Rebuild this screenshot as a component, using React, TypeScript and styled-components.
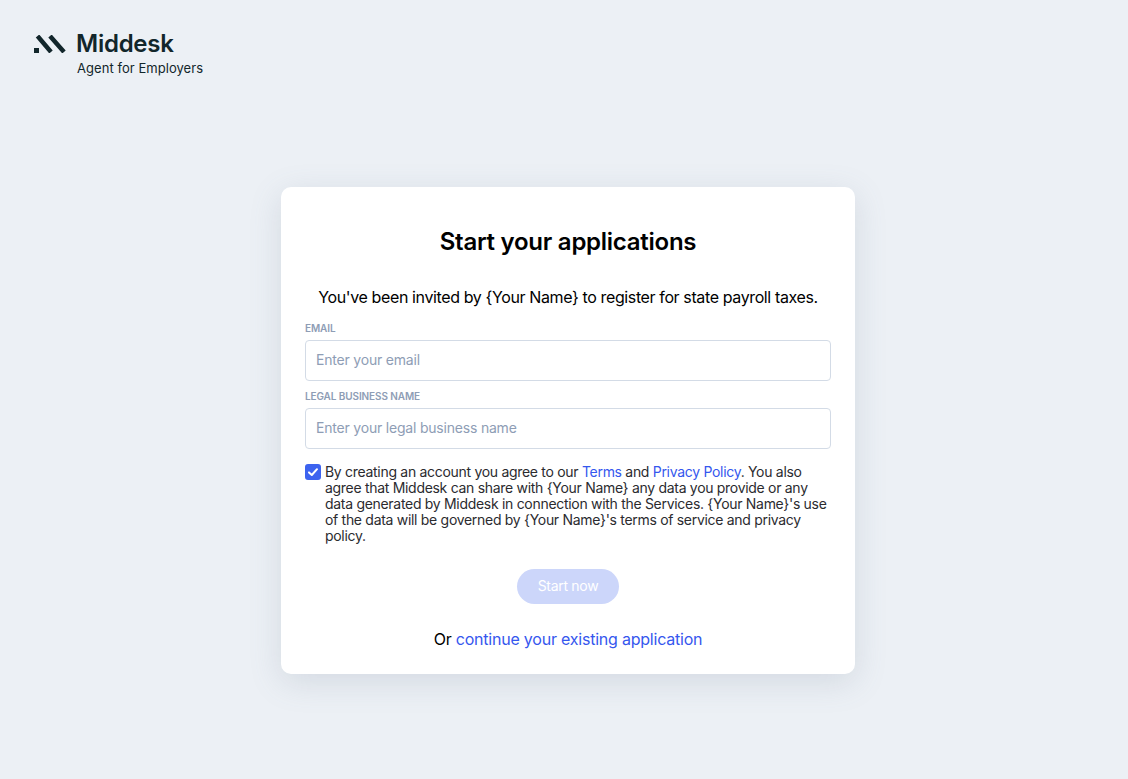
import React from "react";
import styled, { createGlobalStyle } from "styled-components";

const Global = createGlobalStyle`
  html, body { margin: 0; padding: 0; height: 100%; background: #ecf0f5; }
  body { font-family: Inter, "Liberation Sans", sans-serif; color: #000; }
  * { box-sizing: border-box; }
`;

const Page = styled.div`
  min-height: 779px;
  display: flex;
  flex-direction: column;
  background: #ecf0f5;
`;

const Header = styled.header`
  height: 82px;
  padding: 31px 0 0 34px;
`;

const Brand = styled.div`
  display: grid;
  grid-template-columns: 42px auto;
  justify-content: start;
`;

const Wordmark = styled.div`
  font-size: 24px;
  line-height: 26px;
  font-weight: 600;
  letter-spacing: -0.25px;
  color: #12262b;
`;

const Tagline = styled.div`
  grid-column: 2;
  font-size: 13px;
  line-height: 16px;
  margin: 3px 0 0 1px;
  color: #12262b;
  letter-spacing: 0.05px;
`;

const Main = styled.main`
  flex: 1;
  display: flex;
  align-items: center;
  justify-content: center;
  padding-left: 8px;
`;

const Card = styled.section`
  width: 574px;
  height: 487px;
  background: #fff;
  border-radius: 10px;
  box-shadow: 0 8px 32px rgba(100, 116, 139, 0.18);
  padding: 40px 24px 0;
  display: flex;
  flex-direction: column;
`;

const Title = styled.h1`
  margin: 0;
  font-size: 24px;
  line-height: 30px;
  font-weight: 600;
  letter-spacing: -0.26px;
  text-align: center;
  color: #000;
`;

const Intro = styled.p`
  margin: 30px -10px 0;
  font-size: 16px;
  line-height: 20px;
  letter-spacing: -0.38px;
  text-align: center;
  color: #000;
`;

const Field = styled.label<{ $first?: boolean }>`
  display: block;
  margin-top: ${(p) => (p.$first ? "15px" : "9px")};
`;

const FieldLabel = styled.span`
  display: block;
  font-size: 10px;
  line-height: 12px;
  font-weight: 600;
  letter-spacing: -0.1px;
  color: #8e9db5;
  text-transform: uppercase;
  margin-bottom: 6px;
`;

const Input = styled.input`
  display: block;
  width: 100%;
  height: 41px;
  border: 1px solid #d3dbe6;
  border-radius: 4px;
  background: #fff;
  padding: 0 10px 2px;
  font-family: inherit;
  font-size: 14px;
  letter-spacing: -0.2px;
  color: #000;
  &::placeholder { color: #8e9db5; opacity: 1; }
`;

const Consent = styled.div`
  display: flex;
  gap: 4px;
  margin-top: 15px;
  font-size: 14px;
  line-height: 16px;
  letter-spacing: -0.3px;
  color: #2b2b2f;
`;

const CheckBox = styled.span`
  flex: none;
  width: 16px;
  height: 16px;
  border-radius: 3px;
  background: #3d63ef;
  display: flex;
  align-items: center;
  justify-content: center;
`;

const ConsentText = styled.p`
  margin: 0;
  width: 506px;
`;

const Link = styled.a`
  color: #3557ee;
  text-decoration: none;
`;

const Submit = styled.button`
  align-self: center;
  margin-top: 25px;
  width: 102px;
  height: 35px;
  border: 0;
  border-radius: 18px;
  background: #ccd6fa;
  color: #fff;
  font-family: inherit;
  font-size: 14px;
  letter-spacing: -0.3px;
  padding: 0 0 2px;
`;

const Footer = styled.p`
  margin: 25px 0 0;
  font-size: 16px;
  line-height: 20px;
  letter-spacing: -0.22px;
  text-align: center;
  color: #000;
`;

export default function App() {
  return (
    <Page>
      <Global />
      <Header>
        <Brand>
          <svg width="33" height="18" viewBox="0 0 33 18" aria-hidden="true" style={{ marginTop: 4 }}>
            <path fill="#12262b" d="M0 13h5v5H0z" />
            <path stroke="#12262b" strokeWidth="4.500" fill="none" d="M3.500 1 17 17M16 1 30 17" />
          </svg>
          <Wordmark>Middesk</Wordmark>
          <Tagline>Agent for Employers</Tagline>
        </Brand>
      </Header>
      <Main>
        <Card>
          <Title>Start your applications</Title>
          <Intro>You've been invited by {"{Your Name}"} to register for state payroll taxes.</Intro>
          <Field $first>
            <FieldLabel>Email</FieldLabel>
            <Input placeholder="Enter your email" />
          </Field>
          <Field>
            <FieldLabel>Legal business name</FieldLabel>
            <Input placeholder="Enter your legal business name" />
          </Field>
          <Consent>
            <CheckBox>
              <svg width="12" height="12" viewBox="0 0 12 12" fill="none" aria-hidden="true">
                <path d="M2 6.400 4.800 9 10 3.200" stroke="#fff" strokeWidth="2" strokeLinecap="round" strokeLinejoin="round" />
              </svg>
            </CheckBox>
            <ConsentText>
              By creating an account you agree to our <Link href="#">Terms</Link> and <Link href="#">Privacy Policy</Link>. You also agree that Middesk can share with {"{Your Name}"} any data you provide or any data generated by Middesk in connection with the Services. {"{Your Name}"}'s use of the data will be governed by {"{Your Name}"}'s terms of service and privacy policy.
            </ConsentText>
          </Consent>
          <Submit>Start now</Submit>
          <Footer>Or <Link href="#">continue your existing application</Link></Footer>
        </Card>
      </Main>
    </Page>
  );
}
